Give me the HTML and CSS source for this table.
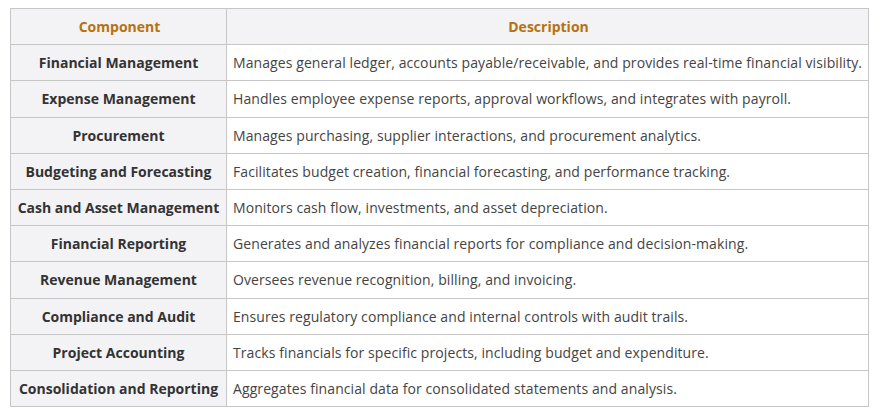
FILE: index.html
```html
<!DOCTYPE html>
<html>
<head>
<meta charset="utf-8">
<link rel="stylesheet" href="styles.css">
</head>
<body>
<table class="grid">
  <thead>
    <tr><th class="c1">Component</th><th>Description</th></tr>
  </thead>
  <tbody>
    <tr><td class="name">Financial Management</td><td>Manages general ledger, accounts payable/receivable, and provides real-time financial visibility.</td></tr>
    <tr><td class="name">Expense Management</td><td>Handles employee expense reports, approval workflows, and integrates with payroll.</td></tr>
    <tr><td class="name">Procurement</td><td>Manages purchasing, supplier interactions, and procurement analytics.</td></tr>
    <tr><td class="name">Budgeting and Forecasting</td><td>Facilitates budget creation, financial forecasting, and performance tracking.</td></tr>
    <tr><td class="name">Cash and Asset Management</td><td>Monitors cash flow, investments, and asset depreciation.</td></tr>
    <tr><td class="name">Financial Reporting</td><td>Generates and analyzes financial reports for compliance and decision-making.</td></tr>
    <tr><td class="name">Revenue Management</td><td>Oversees revenue recognition, billing, and invoicing.</td></tr>
    <tr><td class="name">Compliance and Audit</td><td>Ensures regulatory compliance and internal controls with audit trails.</td></tr>
    <tr><td class="name">Project Accounting</td><td>Tracks financials for specific projects, including budget and expenditure.</td></tr>
    <tr><td class="name">Consolidation and Reporting</td><td>Aggregates financial data for consolidated statements and analysis.</td></tr>
  </tbody>
</table>
</body>
</html>
```
FILE: styles.css
```css
html, body {
  margin: 0;
  background: #ffffff;
}
body {
  padding: 8px 0 0 10px;
  font-family: "Open Sans", "Liberation Sans", sans-serif;
  font-size: 14px;
  color: #3a3a3a;
}
.grid {
  border-collapse: collapse;
  width: 859px;
  table-layout: fixed;
}
.grid th, .grid td {
  border: 1px solid #c6c6c6;
  height: 36.2px;
  padding: 0 4px 0 6px;
  line-height: 19px;
  box-sizing: border-box;
  white-space: nowrap;
  overflow: visible;
}
.grid th {
  background: #f3f2f5;
  color: #b5730f;
  font-weight: 700;
  text-align: center;
}
.grid .c1 {
  width: 216px;
}
.grid td {
  text-align: left;
  color: #444444;
  letter-spacing: 0.09px;
}
.grid td.name {
  background: #f3f2f5;
  font-weight: 700;
  text-align: center;
  color: #333333;
  letter-spacing: 0;
  padding: 0 2px;
}
```
